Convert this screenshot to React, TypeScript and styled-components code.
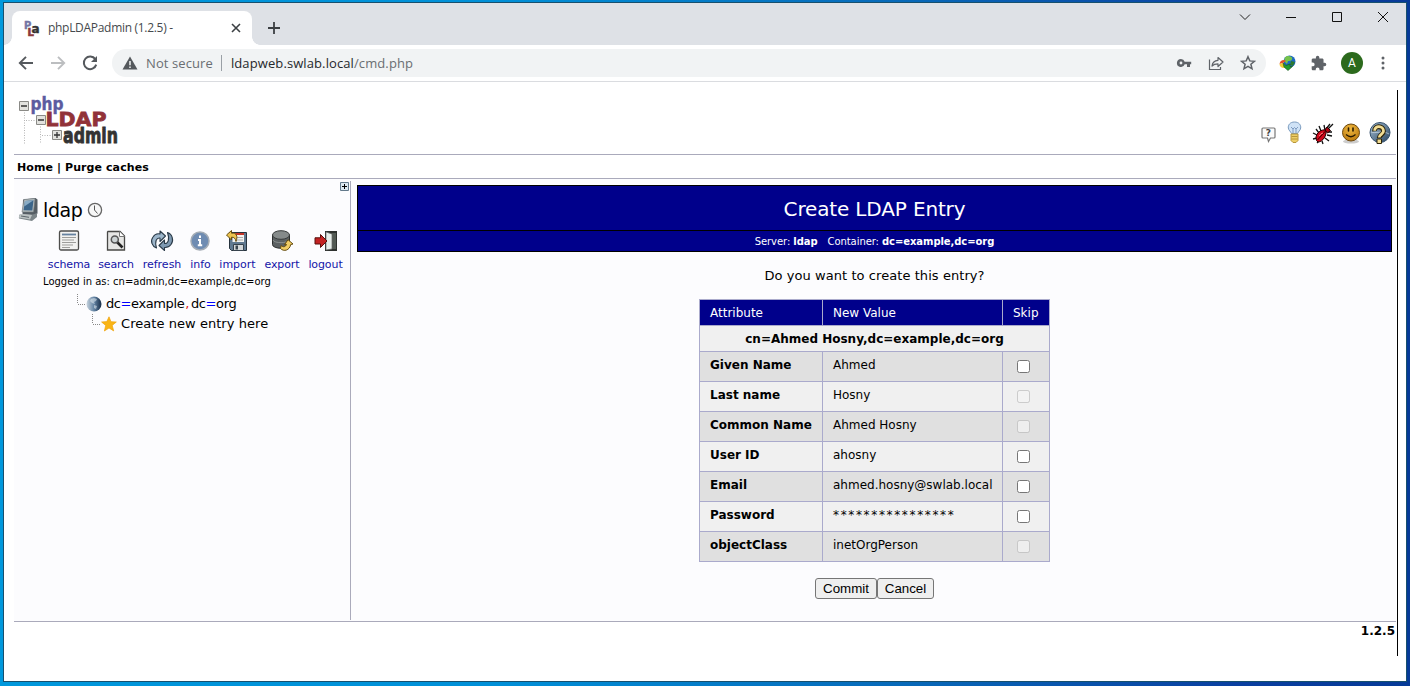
import React from "react";
import styled, { createGlobalStyle } from "styled-components";

const Global = createGlobalStyle`
  * { box-sizing: border-box; }
  html, body { margin: 0; padding: 0; }
  body { width: 1410px; height: 686px; overflow: hidden; }
`;

const verdana = `Verdana, "DejaVu Sans", sans-serif`;
const segoe = `"Segoe UI", "Open Sans", "Noto Sans", sans-serif`;

const Desktop = styled.div`
  width: 1410px;
  height: 686px;
  padding: 2px 3px 4px;
  background: linear-gradient(90deg, #0098dc 0%, #0090d8 35%, #0868b8 65%, #0a3fa0 88%, #063a98 100%);
`;
const Window = styled.div`
  width: 1404px;
  height: 680px;
  border: 1px solid #17506e;
  background: #fff;
  display: flex;
  flex-direction: column;
`;

/* browser chrome */
const TitleBar = styled.div`
  height: 42px;
  background: #dee1e6;
  display: flex;
  align-items: flex-start;
  padding-left: 8px;
`;
const Tab = styled.div`
  width: 240px;
  height: 34px;
  margin-top: 8px;
  padding: 0 9px 0 12px;
  border-radius: 8px 8px 0 0;
  background: #fff;
  display: flex;
  align-items: center;
  position: relative;
  &::before, &::after {
    content: "";
    position: absolute;
    bottom: 0;
    width: 8px;
    height: 8px;
  }
  &::before { left: -8px; background: radial-gradient(circle at 0 0, #dee1e6 7.5px, #fff 8px); }
  &::after { right: -8px; background: radial-gradient(circle at 100% 0, #dee1e6 7.5px, #fff 8px); }
`;
const TabTitle = styled.span`
  flex: 1;
  margin-left: 8px;
  font: 12px/16px ${segoe};
  letter-spacing: -0.3px;
  color: #45494d;
  white-space: pre;
`;
const NewTab = styled.div`
  margin: 18px 0 0 16px;
  height: 14px;
  display: flex;
`;
const WindowButtons = styled.div`
  margin: 5px 17px 0 auto;
  height: 17px;
  display: flex;
  align-items: center;
  gap: 34px;
`;
const Toolbar = styled.div`
  height: 37px;
  border-bottom: 1px solid #dadce0;
  display: flex;
  align-items: center;
  padding: 0 15px 0 14px;
`;
const NavIcons = styled.div`
  display: flex;
  align-items: center;
  gap: 16px;
  width: 94px;
`;
const Omnibox = styled.div`
  width: 1154px;
  height: 28px;
  border-radius: 14px;
  background: #f1f3f4;
  display: flex;
  align-items: center;
  padding: 0 10px 0 10px;
`;
const UrlText = styled.span<{ $color: string }>`
  font: 13px/18px ${segoe};
  letter-spacing: 0.1px;
  color: ${(p) => p.$color};
  white-space: pre;
`;
const SecurityLabel = styled(UrlText)`
  margin-left: 8px;
`;
const UrlDivider = styled.i`
  width: 1px;
  height: 16px;
  margin: 0 9px 0 8px;
  background: #9aa0a6;
`;
const OmniActions = styled.div`
  margin-left: auto;
  display: flex;
  align-items: center;
  gap: 16px;
`;
const Extensions = styled.div`
  margin-left: 13px;
  display: flex;
  align-items: center;
  gap: 15px;
`;
const Avatar = styled.span`
  width: 22px;
  height: 22px;
  margin: 0 3px 0 -1px;
  border-radius: 50%;
  background: #2c6a1d;
  color: #fff;
  font: 12px/22px Roboto, sans-serif;
  text-align: center;
`;

/* page */
const Viewport = styled.div`
  flex: 1;
  padding: 8px 8px 0 10px;
  display: flex;
  align-items: flex-start;
`;
const Page = styled.div`
  width: 1384px;
  height: 566px;
  border-right: 1px solid #000;
  display: flex;
  flex-direction: column;
  font-family: ${verdana};
  color: #000;
`;
const Header = styled.header`
  width: 1382px;
  height: 65px;
  border-bottom: 1px solid #aaaabb;
  display: flex;
  justify-content: space-between;
  padding: 5px 4px 0 4px;
`;
const HeaderIcons = styled.div`
  display: flex;
  align-items: center;
  gap: 5px;
  height: 24px;
  margin-top: 26px;
`;
const MenuBar = styled.nav`
  width: 1382px;
  height: 24px;
  border-bottom: 1px solid #aaaabb;
  padding-left: 3px;
  font: bold 11px/25px ${verdana};
  letter-spacing: 0.09px;
`;
const Columns = styled.div`
  width: 1382px;
  height: 443px;
  display: flex;
  background: #fcfcfe;
  border-bottom: 1px solid #aaaabb;
`;
const Sidebar = styled.aside`
  width: 337px;
  height: 439px;
  margin-top: 2px;
  border-right: 1px solid #aaaabb;
  display: flex;
  flex-direction: column;
`;
const ExpandRow = styled.div`
  height: 13px;
  display: flex;
  justify-content: flex-end;
  padding: 1px 1px 0 0;
`;
const ServerRow = styled.div`
  height: 31px;
  display: flex;
  align-items: center;
  padding-left: 4px;
`;
const ServerName = styled.span`
  width: 48px;
  padding-left: 4px;
  font-size: 19px;
  line-height: 26px;
  letter-spacing: -0.4px;
`;
const Tools = styled.div`
  display: flex;
  gap: 8px;
  padding: 4px 0 0 34px;
`;
const Tool = styled.a<{ $w: number; $ls: number }>`
  width: ${(p) => p.$w}px;
  height: 46px;
  display: flex;
  flex-direction: column;
  align-items: center;
  font-size: 11px;
  line-height: 23px;
  letter-spacing: ${(p) => p.$ls}px;
  color: #1414a8;
  white-space: nowrap;
  svg { flex: none; margin-left: -1px; }
`;
const LoginInfo = styled.div`
  height: 19px;
  padding-left: 29px;
  font-size: 10px;
  line-height: 13px;
`;
const TreeRow = styled.div<{ $indent: number }>`
  height: 20px;
  display: flex;
  align-items: center;
  padding-left: ${(p) => p.$indent}px;
`;
const TreeText = styled.span<{ $ls: number }>`
  margin-left: 4px;
  font-size: 13px;
  line-height: 20px;
  letter-spacing: ${(p) => p.$ls}px;
  white-space: pre;
  b { font-weight: normal; color: #0000ff; }
  i { font-style: normal; color: #e02020; margin: 0 2px 0 1px; }
`;

const Main = styled.main`
  flex: 1;
  padding: 6px 4px 0 6px;
  display: flex;
  flex-direction: column;
  align-items: center;
`;
const Title = styled.h1`
  width: 100%;
  height: 46px;
  margin: 0;
  border: 1px solid #000;
  background: #00008b;
  color: #fff;
  text-align: center;
  font: 20px/46px ${verdana};
  letter-spacing: -0.15px;
`;
const SubTitle = styled.div`
  width: 100%;
  height: 21px;
  border: 1px solid #000;
  border-top: 0;
  background: #00008b;
  color: #fff;
  display: flex;
  justify-content: center;
  gap: 10px;
  font-size: 10px;
  line-height: 21px;
  letter-spacing: -0.07px;
`;
const Question = styled.p`
  margin: 0;
  height: 47px;
  font-size: 13px;
  line-height: 47px;
  letter-spacing: 0.07px;
`;
const Table = styled.table`
  width: 351px;
  table-layout: fixed;
  border-collapse: collapse;
  font-size: 12px;
  letter-spacing: 0;
`;
const HeadCell = styled.th`
  height: 26px;
  padding: 0 0 0 10px;
  border: 1px solid #aaaacc;
  background: #00008b;
  color: #fff;
  font-weight: normal;
  line-height: 16px;
  text-align: left;
`;
const DnCell = styled.td`
  height: 26px;
  padding: 0;
  border: 1px solid #aaaacc;
  background: #f0f0f0;
  font-weight: bold;
  line-height: 16px;
  text-align: center;
`;
const Cell = styled.td<{ $dark: boolean; $bold?: boolean; $ls?: number }>`
  height: 30px;
  padding: 5px 0 0 10px;
  border: 1px solid #aaaacc;
  background: ${(p) => (p.$dark ? "#e0e0e0" : "#f0f0f0")};
  font-weight: ${(p) => (p.$bold ? "bold" : "normal")};
  line-height: 16px;
  letter-spacing: ${(p) => p.$ls ?? 0}px;
  vertical-align: top;
  white-space: nowrap;
`;
const Check = styled.input`
  display: block;
  width: 13px;
  height: 13px;
  margin: 3px 0 0 4px;
`;
const Buttons = styled.div`
  display: flex;
  margin-top: 16px;
`;
const Button = styled.button<{ $w: number }>`
  width: ${(p) => p.$w}px;
  height: 21px;
  padding: 0;
  border: 1px solid #767676;
  border-radius: 3px;
  background: #efefef;
  color: #000;
  font: 13.333px/19px Arial, "Liberation Sans", sans-serif;
`;
const Version = styled.footer`
  width: 1382px;
  padding-right: 1px;
  text-align: right;
  font: bold 12px/19px ${verdana};
`;

const Favicon = () => (
  <svg width="16" height="18" viewBox="0 0 16 18" overflow="visible" fontFamily="DejaVu Sans" fontWeight="bold">
    <text x="0" y="9.500" fontSize="10" fill="#7474a4" stroke="#7474a4" strokeWidth=".4">P</text>
    <text x="3.500" y="16.500" fontSize="10" fill="#8b3a3a" stroke="#8b3a3a" strokeWidth=".6">L</text>
    <text x="7.500" y="14" fontSize="12" fill="#333" stroke="#333" strokeWidth=".4">a</text>
  </svg>
);

const Logo = () => (
  <svg width="102" height="54" viewBox="0 0 102 54" overflow="visible">
    <g stroke="#b5b5b5" strokeDasharray="1 1.5" fill="none">
      <path d="M6.500 15V49M8 25.500h9M22.500 29V49M24 40.500h9" />
    </g>
    <g fill="#e2e2de" stroke="#8a8a86">
      <path d="M1.500 6.500h9v9h-9zM18.500 20.500h9v9h-9zM34.500 35.500h9v9h-9z" />
    </g>
    <path d="M3 11h6M20 25h6M36 40h6M39 37v6" stroke="#333" strokeWidth="1.300" />
    <g fontFamily="DejaVu Sans" fontWeight="bold">
      <text x="12.500" y="15" fontSize="17" fill="#5b5ba0" stroke="#5b5ba0" strokeWidth="0.400" textLength="33" lengthAdjust="spacingAndGlyphs">php</text>
      <text x="27.500" y="31" fontSize="20" fill="#913238" stroke="#913238" strokeWidth="0.800" textLength="61" lengthAdjust="spacingAndGlyphs">LDAP</text>
      <text x="45" y="48" fontSize="22" fill="#333" stroke="#333" strokeWidth="0.900" textLength="55" lengthAdjust="spacingAndGlyphs">admin</text>
    </g>
  </svg>
);

const HelpBubble = () => (
  <svg width="20" height="20" viewBox="-1 -1 20 20">
    <path d="M4 4h11q1 0 1 1v8q0 1-1 1h-3.500l-2 3.500-1-3.500H4q-1 0-1-1V5q0-1 1-1z" fill="#fafafa" stroke="#777" strokeWidth="1.200" />
    <text x="6.800" y="12.300" fontSize="9" fontWeight="bold" fontFamily="DejaVu Sans" fill="#444">?</text>
  </svg>
);
const Bulb = () => (
  <svg width="22" height="24" viewBox="0 1 22 24">
    <path d="M11.500 2C7 2 5 5 5.300 8c.2 2.500 2.700 3.500 3 5.500h6.400c.3-2 2.800-3 3-5.500C18 5 16 2 11.500 2z" fill="#cfe2f6" stroke="#7b9cc0" />
    <path d="M8 7l2 2 1.500-1.500L13 9l2-2M10 9v4M13 9v4" stroke="#7f9cc2" fill="none" />
    <path d="M8 14h7v6.500L13 22.500h-3L8 20.500z" fill="#edcf67" stroke="#b8963c" />
    <path d="M8.500 16.500h6M8.500 19h6" stroke="#b8963c" />
  </svg>
);
const Bug = () => (
  <svg width="24" height="24" viewBox="-1 0 24 24">
    <path d="M8 12L5 8M10 10L8 5M14 9l-1-5M15 8l4-5M17 8l5-5M6 14l-4-2M6 17l-4 1M8 20l-2 2M11 20l1 3M14 17l4 3M16 14l5 1M17 11l4 0" stroke="#111" strokeWidth="1.300" fill="none" />
    <path d="M5 17c0-5 5-9 10-8 1 5-3 12-8 12q-2-1-2-4z" fill="#d0081c" stroke="#200" />
    <path d="M14 9l2-3 3.500 3.500-3 2.500z" fill="#b00412" stroke="#200" />
    <path d="M6.500 19L14.500 10" stroke="#400" />
    <path d="M8 15q2-3 4-3" stroke="#ff7b7b" fill="none" />
  </svg>
);
const Smile = () => (
  <svg width="24" height="24" viewBox="0 0 24 24">
    <defs>
      <radialGradient id="face" cx=".45" cy=".3" r=".7">
        <stop offset="0" stopColor="#efb840" /><stop offset="1" stopColor="#bd7c10" />
      </radialGradient>
    </defs>
    <ellipse cx="12" cy="20.500" rx="8" ry="2" fill="#ccc" />
    <circle cx="12" cy="11.500" r="8.500" fill="url(#face)" stroke="#6f4a10" />
    <path d="M9.500 7v3M14 7v3" stroke="#2a1a00" strokeWidth="1.600" strokeLinecap="round" />
    <path d="M7 13.500q5 4.500 9.500 0" stroke="#2a1a00" strokeWidth="1.200" fill="none" />
  </svg>
);
const HelpBall = () => (
  <svg width="24" height="24" viewBox="0 0 24 24">
    <defs>
      <linearGradient id="ball" x1="0" y1="0" x2="1" y2="1">
        <stop offset="0" stopColor="#a7c0d5" /><stop offset="1" stopColor="#27435f" />
      </linearGradient>
    </defs>
    <circle cx="12" cy="11.500" r="10" fill="url(#ball)" stroke="#33506d" />
    <path d="M3 11c4 2 12-2 18 2" stroke="#dce8f2" strokeOpacity=".6" fill="none" />
    <path d="M6.500 10.200c-.5-6.200 9-5.700 9 0 0 3.300-4.300 3.500-4.300 6.800" stroke="#2c2408" strokeWidth="4.800" fill="none" />
    <path d="M9 18h4.500v4.500H9z" fill="#f2dd94" stroke="#2c2408" />
    <path d="M6.700 9.700c-.3-5.700 8.800-5.200 8.800.3 0 3.300-4.300 3.500-4.300 6.500" stroke="#f2dd94" strokeWidth="2.800" fill="none" />
  </svg>
);

const Computer = () => (
  <svg width="21" height="25" viewBox="0 0 21 25">
    <path d="M5 2.500L17.500 1l2 1.500v14l-2 1.500-13-.5z" fill="#555d64" />
    <path d="M6 2.500L17 1.500 15.500 15 4 15z" fill="#b4bbbd" stroke="#70787e" strokeWidth=".6" />
    <path d="M7 4l8.500-.8L14.300 13.500 5.500 13.300z" fill="#3b658a" />
    <path d="M7 4l8.500-.8L6.200 9.500z" fill="#88abc5" />
    <path d="M1.500 17.500L14 18l5-2v4l-5 4L1 21.500z" fill="#7c8589" />
    <path d="M2.500 17L14 18l-2 4.500L.5 20.500z" fill="#bcc3c3" />
    <path d="M3 19l8 1.300" stroke="#5b646a" />
  </svg>
);
const Clock = () => (
  <svg width="16" height="16" viewBox="0 0 16 16">
    <circle cx="8" cy="8" r="6.600" fill="#f7f7f7" stroke="#666" strokeWidth="1.300" />
    <path d="M7.500 3.500V8l3 3.500" stroke="#555" fill="none" />
  </svg>
);

const SchemaIcon = () => (
  <svg width="24" height="24" viewBox="0 0 24 24">
    <rect x="2.500" y="2" width="19" height="19" rx="1.500" fill="#f2f2f0" stroke="#4e4e4c" strokeWidth="1.300" />
    <path d="M5 5.500h14" stroke="#6582a0" strokeWidth="1.800" />
    <path d="M5 8.500h14M5 11h12M5 13.500h14M5 16h11M5 18.500h8" stroke="#9d9d9a" />
  </svg>
);
const SearchIcon = () => (
  <svg width="24" height="24" viewBox="0 0 24 24">
    <path d="M4 2.500h12l4.500 4.500v14H3.500v-18z" fill="#e6e6e4" stroke="#484846" strokeWidth="1.300" />
    <path d="M15.500 2.500V7.500h5" fill="#fff" stroke="#777" />
    <path d="M13 13l5.500 5.500" stroke="#222" strokeWidth="2.600" />
    <circle cx="10.800" cy="10.500" r="3.500" fill="#cdd3d4" stroke="#555" strokeWidth="1.500" />
  </svg>
);
const RefreshIcon = () => (
  <svg width="24" height="24" viewBox="0 0 24 24" stroke="#2b3b49" strokeWidth="1.100" strokeLinejoin="round">
    <path d="M6.500 19C2 17.500 0 12 3 8c1.500-2.500 4.500-3.700 7-3V2l5.500 5-5.500 5.500V9C6.500 8.500 4.500 12 6.500 19z" fill="#9db6cb" />
    <path d="M17.500 3.500c5 1.500 6.500 8 3.500 12-1.500 2-4 3.200-6.500 3v3L9 16.500l5.500-5.500v3.500c3.500.5 5.500-4 3-11z" fill="#7f9ab2" />
  </svg>
);
const InfoIcon = () => (
  <svg width="24" height="24" viewBox="0 0 24 24">
    <circle cx="12" cy="12" r="9" fill="#6f8cb2" stroke="#a4acb5" strokeWidth="1.500" />
    <path d="M12 6.500v2.400M10 11h2v5M9.800 16.300h4.400" stroke="#fff" strokeWidth="2" fill="none" />
  </svg>
);
const ImportIcon = () => (
  <svg width="24" height="24" viewBox="0 0 24 24">
    <path d="M4.500 3.500h17v18h-15l-2-2z" fill="#607990" stroke="#26323d" />
    <path d="M7.500 4h11.500v9H7.500z" fill="#f3f3f1" />
    <path d="M9.500 4h9.500v2H9.500z" fill="#c43628" />
    <path d="M12 8.500h6M10 11h8" stroke="#aaa" />
    <path d="M8.500 15.500h10v6h-10z" fill="#d4d8da" stroke="#36424d" />
    <path d="M10.500 16.500h2.500v4h-2.500z" fill="#38444e" />
    <path d="M1.500 6L6.500 1.500v2.700c5-.7 6.500 2.800 4.500 8.300-.5-3-2-4.500-4.500-4.300v2.800z" fill="#edc34f" stroke="#654c10" />
  </svg>
);
const ExportIcon = () => (
  <svg width="24" height="24" viewBox="0 0 24 24">
    <path d="M2.500 6v9.500c0 5 17 5 17 0V6z" fill="#5c6163" stroke="#2c2e2e" />
    <path d="M3 11c1 3.500 15 3.500 16 0" stroke="#8a8f8e" fill="none" />
    <ellipse cx="11" cy="6" rx="8.500" ry="4.300" fill="#858a8a" stroke="#383b3b" />
    <path d="M11 16.500c2 2 4.500 1.500 5.500-1l-2 .2 3.500-5 5 4.300-2.300.5c-1 6-7 7.500-10.200 4z" fill="#f0cc64" stroke="#654c10" />
  </svg>
);
const LogoutIcon = () => (
  <svg width="24" height="24" viewBox="0 0 24 24">
    <path d="M12 2h12v20H12z" fill="#2d312e" />
    <path d="M19 4h4v16h-4z" fill="#525a54" />
    <path d="M13 3l6 2v15l-6 1z" fill="#e6eeea" stroke="#666" strokeWidth=".7" />
    <path d="M2 8.800h5.500V5.500L14 12l-6.500 6.500V15H2z" fill="#c32222" stroke="#57100c" />
  </svg>
);

const Globe = () => (
  <svg width="16" height="16" viewBox="0 0 16 16">
    <defs>
      <linearGradient id="globe"><stop offset="0" stopColor="#c8d4de" /><stop offset=".5" stopColor="#6484a4" /><stop offset="1" stopColor="#152c47" /></linearGradient>
    </defs>
    <circle cx="8" cy="8" r="7.500" fill="url(#globe)" />
    <path d="M5 3l3-1 3 1-1 2-2 1 1 2-3-1-2-2zM8 9l3 1-1 3-2-1z" fill="#e4edf2" opacity=".55" />
  </svg>
);
const Star = () => (
  <svg width="16" height="16" viewBox="0 0 16 16">
    <path d="M8 .8l2 4.900 5.300.3-4.100 3.400 1.500 5.500L8 12l-4.600 3 1.300-5.600L.6 6l5.200-.4z" fill="#f9b516" stroke="#efa30d" strokeWidth=".7" />
  </svg>
);
const Branch = () => (
  <svg width="9" height="20" viewBox="0 0 9 20">
    <path d="M.5 0V10M1 10.500h8" stroke="#888" strokeDasharray="1 1" fill="none" />
  </svg>
);
const Expand = () => (
  <svg width="9" height="9" viewBox="0 0 9 9">
    <path d="M.5.5h8v8h-8z" fill="#dce8f0" stroke="#63798b" />
    <path d="M2 4.500h5M4.500 2v5" stroke="#000" />
  </svg>
);

const BackArrow = ({ color }: { color: string }) => (
  <svg width="16" height="16" viewBox="0 0 16 16" fill="none" stroke={color} strokeWidth="1.900">
    <path d="M15 8H2.500M8 1.800L1.800 8 8 14.200" />
  </svg>
);
const ForwardArrow = ({ color }: { color: string }) => (
  <svg width="16" height="16" viewBox="0 0 16 16" fill="none" stroke={color} strokeWidth="1.900">
    <path d="M1 8h12.500M8 1.800L14.200 8 8 14.200" />
  </svg>
);
const Reload = () => (
  <svg width="16" height="16" viewBox="0 0 16 16">
    <path d="M13.300 4.200A6.300 6.300 0 1 0 14.200 9.600" fill="none" stroke="#55595d" strokeWidth="2" />
    <path d="M15 1v6H9z" fill="#55595d" />
  </svg>
);
const Warning = () => (
  <svg width="16" height="14" viewBox="0 0 16 14">
    <path d="M8 .5L15.500 13.500H.5z" fill="#55595d" />
    <path d="M8 5v4.200M8 10.500v1.600" stroke="#f1f3f4" strokeWidth="1.500" />
  </svg>
);
const Key = () => (
  <svg width="16" height="16" viewBox="0 0 16 16">
    <path d="M5 4a4 4 0 1 0 3.700 5.300h2.300V12h3V9.300h1.200V6.700H8.700A4 4 0 0 0 5 4zm0 2.600a1.400 1.400 0 1 1 0 2.800 1.400 1.400 0 0 1 0-2.800z" fill="#5f6368" fillRule="evenodd" />
  </svg>
);
const Share = () => (
  <svg width="16" height="16" viewBox="0 0 16 16" fill="none" stroke="#5f6368" strokeWidth="1.200">
    <path d="M1.500 4.500v10h11V12" />
    <path d="M4 11c.5-4 2.500-5.500 6-5.700V2.500L15 7l-5 4.500V8.800c-3 0-4.500.5-6 2.200z" strokeLinejoin="round" />
  </svg>
);
const Bookmark = () => (
  <svg width="16" height="16" viewBox="0 0 16 16">
    <path d="M8 1.700l1.800 4.200 4.600.4-3.500 3 1.100 4.500L8 11.400l-4 2.400 1.100-4.500-3.500-3 4.600-.4z" fill="none" stroke="#5f6368" strokeWidth="1.500" />
  </svg>
);
const DownloadGlobe = () => (
  <svg width="17" height="16" viewBox="0 0 17 16">
    <circle cx="10.500" cy="6.500" r="6" fill="#1d68c2" />
    <path d="M6 2.500c3-3 6-1 7 0 1 3-2 4-4 3.500L8 9 5 6z" fill="#76c34b" />
    <path d="M12 6l4 1-2 4-3-1z" fill="#2c7a2f" />
    <path d="M.5 9C1 5 5 4 7 6L4 8z" fill="#e04f2c" />
    <path d="M.5 9l3.500-1 3 3.500-2 1.500C2 13 .5 11 .5 9z" fill="#f0cd33" />
    <path d="M4 8l3 2.500 4-1.500v2.500h2.500L9 15.500 5 12z" fill="#249a2d" stroke="#15541b" strokeWidth=".6" />
  </svg>
);
const Puzzle = () => (
  <svg width="16" height="16" viewBox="1 0 23 23">
    <path d="M20.500 11H19V7c0-1.100-.9-2-2-2h-4V3.500a2.500 2.500 0 0 0-5 0V5H4c-1.100 0-2 .9-2 2v3.800h1.500a2.700 2.700 0 0 1 0 5.400H2V20c0 1.100.9 2 2 2h3.800v-1.500a2.700 2.700 0 0 1 5.400 0V22H17c1.100 0 2-.9 2-2v-4h1.500a2.500 2.500 0 0 0 0-5z" fill="#5f6368" />
  </svg>
);
const Dots = () => (
  <svg width="4" height="14" viewBox="0 0 4 14" fill="#5f6368">
    <circle cx="2" cy="2" r="1.500" /><circle cx="2" cy="7" r="1.500" /><circle cx="2" cy="12" r="1.500" />
  </svg>
);

const tools = [
  { label: "schema", w: 42, ls: -0.1, Icon: SchemaIcon },
  { label: "search", w: 36, ls: -0.2, Icon: SearchIcon },
  { label: "refresh", w: 40, ls: 0, Icon: RefreshIcon },
  { label: "info", w: 21, ls: 0, Icon: InfoIcon },
  { label: "import", w: 37, ls: 0, Icon: ImportIcon },
  { label: "export", w: 36, ls: -0.1, Icon: ExportIcon },
  { label: "logout", w: 35, ls: -0.1, Icon: LogoutIcon },
];

const rows = [
  { attribute: "Given Name", value: "Ahmed", skippable: true },
  { attribute: "Last name", value: "Hosny", skippable: false },
  { attribute: "Common Name", value: "Ahmed Hosny", skippable: false },
  { attribute: "User ID", value: "ahosny", skippable: true },
  { attribute: "Email", value: "ahmed.hosny@swlab.local", skippable: true },
  { attribute: "Password", value: "****************", skippable: true, spacing: 1.65 },
  { attribute: "objectClass", value: "inetOrgPerson", skippable: false },
];

export default function App() {
  return (
    <Desktop>
      <Global />
      <Window>
        <TitleBar>
          <Tab>
            <Favicon />
            <TabTitle>phpLDAPadmin (1.2.5) -</TabTitle>
            <svg width="14" height="14" viewBox="0 0 14 14">
              <path d="M3 3l8 8M11 3l-8 8" stroke="#3c4043" strokeWidth="1.600" />
            </svg>
          </Tab>
          <NewTab>
            <svg width="12" height="14" viewBox="0 0 12 14">
              <path d="M0 7h12M6 1v12" stroke="#3c4043" strokeWidth="1.800" />
            </svg>
          </NewTab>
          <WindowButtons>
            <svg width="12" height="12" viewBox="0 0 12 12"><path d="M1 3.500l5 5 5-5" fill="none" stroke="#222" /></svg>
            <svg width="12" height="12" viewBox="0 0 12 12"><path d="M1 6.500h10" stroke="#111" /></svg>
            <svg width="12" height="12" viewBox="0 0 12 12"><path d="M1.500 1.500h9v9h-9z" fill="none" stroke="#111" /></svg>
            <svg width="12" height="12" viewBox="0 0 12 12"><path d="M1 1l10 10M11 1L1 11" stroke="#111" /></svg>
          </WindowButtons>
        </TitleBar>
        <Toolbar>
          <NavIcons>
            <BackArrow color="#55595d" />
            <ForwardArrow color="#bcbec0" />
            <Reload />
          </NavIcons>
          <Omnibox>
            <Warning />
            <SecurityLabel $color="#6a6e72">Not secure</SecurityLabel>
            <UrlDivider />
            <UrlText $color="#25282b">ldapweb.swlab.local</UrlText>
            <UrlText $color="#6a6e72">/cmd.php</UrlText>
            <OmniActions>
              <Key />
              <Share />
              <Bookmark />
            </OmniActions>
          </Omnibox>
          <Extensions>
            <DownloadGlobe />
            <Puzzle />
            <Avatar>A</Avatar>
            <Dots />
          </Extensions>
        </Toolbar>
        <Viewport>
          <Page>
            <Header>
              <Logo />
              <HeaderIcons>
                <HelpBubble />
                <Bulb />
                <Bug />
                <Smile />
                <HelpBall />
              </HeaderIcons>
            </Header>
            <MenuBar>Home | Purge caches</MenuBar>
            <Columns>
              <Sidebar>
                <ExpandRow><Expand /></ExpandRow>
                <ServerRow>
                  <Computer />
                  <ServerName>ldap</ServerName>
                  <Clock />
                </ServerRow>
                <Tools>
                  {tools.map(({ label, w, ls, Icon }) => (
                    <Tool key={label} $w={w} $ls={ls}><Icon />{label}</Tool>
                  ))}
                </Tools>
                <LoginInfo>Logged in as: cn=admin,dc=example,dc=org</LoginInfo>
                <TreeRow $indent={63}>
                  <Branch />
                  <Globe />
                  <TreeText $ls={-0.4}>dc<b>=</b>example<i>,</i>dc<b>=</b>org</TreeText>
                </TreeRow>
                <TreeRow $indent={78}>
                  <Branch />
                  <Star />
                  <TreeText $ls={0.05}>Create new entry here</TreeText>
                </TreeRow>
              </Sidebar>
              <Main>
                <Title>Create LDAP Entry</Title>
                <SubTitle>
                  <span>Server: <b>ldap</b></span>
                  <span>Container: <b>dc=example,dc=org</b></span>
                </SubTitle>
                <Question>Do you want to create this entry?</Question>
                <Table>
                  <colgroup>
                    <col width={123} />
                    <col width={180} />
                    <col width={47} />
                  </colgroup>
                  <tbody>
                    <tr>
                      <HeadCell>Attribute</HeadCell>
                      <HeadCell>New Value</HeadCell>
                      <HeadCell>Skip</HeadCell>
                    </tr>
                    <tr>
                      <DnCell colSpan={3}>cn=Ahmed Hosny,dc=example,dc=org</DnCell>
                    </tr>
                    {rows.map((row, i) => (
                      <tr key={row.attribute}>
                        <Cell $dark={i % 2 === 0} $bold>{row.attribute}</Cell>
                        <Cell $dark={i % 2 === 0} $ls={row.spacing}>{row.value}</Cell>
                        <Cell $dark={i % 2 === 0}><Check type="checkbox" disabled={!row.skippable} /></Cell>
                      </tr>
                    ))}
                  </tbody>
                </Table>
                <Buttons>
                  <Button $w={62}>Commit</Button>
                  <Button $w={57}>Cancel</Button>
                </Buttons>
              </Main>
            </Columns>
            <Version>1.2.5</Version>
          </Page>
        </Viewport>
      </Window>
    </Desktop>
  );
}
